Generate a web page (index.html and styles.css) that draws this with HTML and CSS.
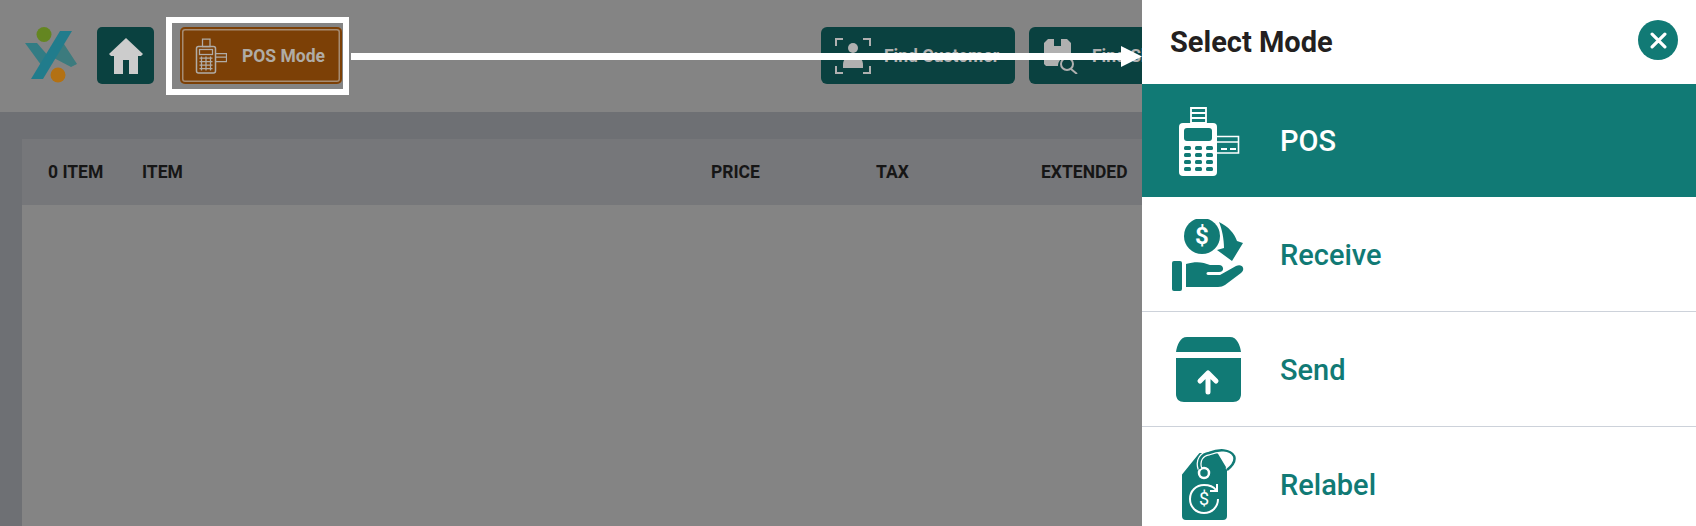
FILE: index.html
```html
<!DOCTYPE html>
<html lang="en">
<head>
<meta charset="utf-8">
<title>Select Mode</title>
<link rel="stylesheet" href="styles.css">
</head>
<body>
<div class="page">
  <header class="topbar">
    <svg class="logo" viewBox="0 0 56 60" aria-hidden="true">
      <circle cx="19" cy="7.500" r="7.500" fill="#7ea82a"/>
      <circle cx="33" cy="48" r="7.500" fill="#e08e18"/>
      <path d="M0 16H12L25 31 19 42Z" fill="#3f9ca6"/>
      <path d="M31 17 37 14 52 37 46 40 27 30Z" fill="#4b9a9e"/>
      <path d="M35 4H47L18 52H6Z" fill="#2a9cb0"/>
    </svg>
    <button class="home-btn" aria-label="Home">
      <svg viewBox="0 0 36 36"><path d="M18 0 35 16 33 18H30V36H21V22H15V36H6V18H3L1 16Z" fill="#fff"/></svg>
    </button>
    <button class="mode-btn">
      <svg class="mode-icon" viewBox="0 0 70 72">
        <path d="M21 2H36V17H21Z" fill="none" stroke="currentColor" stroke-width="2.500"/>
        <rect x="9" y="17" width="38" height="53" rx="4" fill="none" stroke="currentColor" stroke-width="3"/>
        <rect x="15" y="23" width="26" height="10" fill="none" stroke="currentColor" stroke-width="2.500"/>
        <path d="M15 40H41M15 47H41M15 54H41M15 61H41M19 37V65M28 37V65M37 37V65" stroke="currentColor" stroke-width="2.500" fill="none"/>
        <path d="M47 31H69V47H47M47 38H69" fill="none" stroke="currentColor" stroke-width="2.500"/>
      </svg>
      <span>POS Mode</span>
    </button>
    <div class="spacer"></div>
    <button class="find-btn">
      <svg viewBox="0 0 36 36" fill="none" stroke="currentColor" stroke-width="2"><path d="M1 8V1H8M28 1H35V8M1 28V35H8M28 35H35V28"/><circle cx="18" cy="10" r="5" fill="currentColor" stroke="none"/><path d="M8 27C8 21 11 19 18 19S28 21 28 27V30H8Z" fill="currentColor" stroke="none"/></svg>
      <span>Find Customer</span>
    </button>
    <button class="find-btn">
      <svg viewBox="0 0 36 36" fill="none"><path d="M1 5 5 1H11V8H18V1H24L28 5V19C20 18 15 22 15 28H3L1 26Z" fill="currentColor"/><circle cx="24" cy="26" r="6" stroke="currentColor" stroke-width="2"/><path d="M28 31 34 36" stroke="currentColor" stroke-width="2"/></svg>
      <span>Find Shipment</span>
    </button>
  </header>
  <main class="content">
    <div class="table">
      <div class="table-head">
        <span>0 ITEM</span><span>ITEM</span><span>PRICE</span><span>TAX</span><span>EXTENDED</span>
      </div>
    </div>
  </main>

  <div class="overlay"></div>

  <aside class="drawer">
    <div class="drawer-head">
      <h2>Select Mode</h2>
      <button class="close" aria-label="Close">
        <svg viewBox="0 0 16 16"><path d="M2 2 14 14M14 2 2 14" stroke="#fff" stroke-width="3" stroke-linecap="round"/></svg>
      </button>
    </div>
    <div class="mode active">
      <svg class="mode-svg" viewBox="0 -1 76 72">
        <path d="M21 2H36V17H21Z" fill="none" stroke="currentColor" stroke-width="1.800"/>
        <path d="M21 7H36M21 12H36" stroke="currentColor" stroke-width="1.800"/>
        <rect x="9" y="17" width="38" height="53" rx="4" fill="currentColor"/>
        <rect x="14" y="22" width="28" height="13" rx="3" fill="#117a75"/>
        <g fill="#117a75">
          <rect x="14" y="40" width="7" height="4" rx="1.500"/><rect x="25" y="40" width="7" height="4" rx="1.500"/><rect x="36" y="40" width="7" height="4" rx="1.500"/>
          <rect x="14" y="47" width="7" height="4" rx="1.500"/><rect x="25" y="47" width="7" height="4" rx="1.500"/><rect x="36" y="47" width="7" height="4" rx="1.500"/>
          <rect x="14" y="54" width="7" height="4" rx="1.500"/><rect x="25" y="54" width="7" height="4" rx="1.500"/><rect x="36" y="54" width="7" height="4" rx="1.500"/>
          <rect x="14" y="61" width="7" height="4" rx="1.500"/><rect x="25" y="61" width="7" height="4" rx="1.500"/><rect x="36" y="61" width="7" height="4" rx="1.500"/>
        </g>
        <path d="M47 30.500H68.500V47H47M47 36H68.500" fill="none" stroke="currentColor" stroke-width="1.600"/>
        <path d="M51 43H57M60 43H66" stroke="currentColor" stroke-width="1.800"/>
      </svg>
      <span>POS</span>
    </div>
    <div class="mode">
      <svg class="mode-svg" viewBox="0 0 76 72">
        <circle cx="32" cy="17" r="18" fill="currentColor"/>
        <text x="32" y="25" class="coin-text">$</text>
        <path d="M49 3C59 8 64 14 67 22L73 24 62 42 47 31 54 29C54 20 52 10 49 3Z" fill="currentColor"/>
        <rect x="2" y="42" width="10" height="30" rx="2" fill="currentColor"/>
        <path d="M16 45C26 42 33 43 40 46H49C54 46 55 53 49 53H38C36 53 36 56 38 56H50L66 47C72 44 76 50 71 54L55 66C53 67 51 68 48 68H16Z" fill="currentColor"/>
      </svg>
      <span>Receive</span>
    </div>
    <div class="mode">
      <svg class="mode-svg" viewBox="0 0 76 72">
        <path d="M6 18C7 11 10 3 17 3H60C67 3 70 11 71 18Z" fill="currentColor"/>
        <path d="M6 24H71V60C71 65 68 68 63 68H14C9 68 6 65 6 60Z" fill="currentColor"/>
        <path d="M38 58V40M30 47 38 39 46 47" fill="none" stroke="#fff" stroke-width="5" stroke-linecap="round" stroke-linejoin="round"/>
      </svg>
      <span>Send</span>
    </div>
    <div class="mode">
      <svg class="mode-svg" viewBox="0 0 76 72">
        <path d="M30 5H47L56 20V67C56 69 55 70 53 70H16C14 70 13 69 13 67V26Z" fill="currentColor" stroke="currentColor" stroke-width="2" stroke-linejoin="round"/>
        <circle cx="34" cy="24" r="5" fill="none" stroke="#fff" stroke-width="2.500"/>
        <path d="M30 20C27 11 32 5 39 4 49 0 60 0 64 7 66 12 62 17 57 21" fill="none" stroke="#fff" stroke-width="5"/>
        <path d="M30 20C27 11 32 5 39 4 49 0 60 0 64 7 66 12 62 17 57 21" fill="none" stroke="currentColor" stroke-width="2.500"/>
        <path d="M46 41C43 37 39 36 34 36 26 36 20 42 20 50S26 64 34 64 48 58 48 50" fill="none" stroke="#fff" stroke-width="2"/>
        <path d="M40 42H47V35" fill="none" stroke="#fff" stroke-width="2"/>
        <text x="34" y="56" class="tag-text">$</text>
      </svg>
      <span>Relabel</span>
    </div>
  </aside>

  <div class="callout-box"></div>
  <svg class="callout-arrow" viewBox="0 0 792 21" aria-hidden="true">
    <path d="M0 7H770V0L791 10.500 770 21V14H0Z" fill="#fff"/>
  </svg>
</div>
</body>
</html>
```
FILE: styles.css
```css
* { box-sizing: border-box; }
html, body { margin: 0; padding: 0; }
body { font-family: Roboto, "Liberation Sans", sans-serif; background: #fff; }
button { font-family: inherit; border: 0; padding: 0; cursor: pointer; }

.page {
  position: relative;
  width: 1696px;
  height: 526px;
  overflow: hidden;
  background: #8a8d92;
}

.topbar {
  height: 112px;
  background: #a6a6a6;
  display: flex;
  align-items: flex-start;
  padding: 27px 0 0 25px;
}
.logo { width: 56px; height: 60px; flex: none; }
.home-btn {
  flex: none;
  width: 57px;
  height: 57px;
  margin-left: 16px;
  border-radius: 5px;
  background: #0d5250;
  display: flex;
  align-items: center;
  justify-content: center;
}
.home-btn svg { width: 36px; height: 36px; }
.mode-btn {
  flex: none;
  width: 162px;
  height: 57px;
  margin-left: 26px;
  border-radius: 5px;
  background: #9c5008;
  box-shadow: inset 0 0 0 2px #9c5008, inset 0 0 0 3.500px #d0b090;
  color: #dcd8d0;
  font-size: 17.500px;
  font-weight: 700;
  display: flex;
  align-items: center;
  padding-left: 12px;
}
.mode-icon { width: 35px; height: 36px; margin-right: 15px; }
.spacer { flex: 1; }
.find-btn {
  flex: none;
  width: 194px;
  height: 57px;
  margin-right: 14px;
  border-radius: 6px;
  background: #0d5250;
  color: #dcdcdc;
  font-size: 17.500px;
  font-weight: 700;
  display: flex;
  align-items: center;
  gap: 13px;
  padding-left: 14px;
}
.find-btn svg { width: 36px; height: 36px; flex: none; }
.find-btn span { white-space: nowrap; }
.find-btn:last-child { margin-right: 473px; }

.content { padding: 27px 0 0 22px; }
.table { background: #a5a5a5; height: 400px; }
.table-head {
  height: 66px;
  background: #949599;
  display: grid;
  grid-template-columns: 94px 569px 165px 165px 1fr;
  align-items: center;
  padding-left: 26px;
  font-size: 17.500px;
  font-weight: 700;
  color: #1c1c1c;
}

.overlay {
  position: absolute;
  inset: 0;
  background: rgba(0, 0, 0, 0.2);
}

.drawer {
  position: absolute;
  top: 0;
  right: 0;
  bottom: 0;
  width: 554px;
  background: #fff;
}
.drawer-head {
  height: 84px;
  display: flex;
  align-items: center;
  justify-content: space-between;
  padding: 0 18px 0 28px;
}
.drawer-head h2 {
  margin: 0;
  font-size: 29px;
  font-weight: 700;
  color: #231f20;
}
.close {
  width: 40px;
  height: 40px;
  margin-top: -4px;
  border-radius: 50%;
  background: #117a75;
  display: flex;
  align-items: center;
  justify-content: center;
}
.close svg { width: 17px; height: 17px; }

.mode {
  height: 115px;
  display: flex;
  align-items: center;
  padding: 1px 0 0 28px;
  color: #117a75;
  font-size: 29px;
  font-weight: 500;
  border-bottom: 1px solid #cdd2da;
}
.mode.active { background: #117a75; color: #fff; height: 113px; border-bottom: 0; padding-top: 0; }
.mode-svg { width: 76px; height: 72px; margin-right: 34px; flex: none; }
.coin-text { font-size: 24px; font-weight: 700; fill: #fff; text-anchor: middle; font-family: Roboto, sans-serif; }
.tag-text { font-size: 18px; font-weight: 400; fill: #fff; text-anchor: middle; font-family: Roboto, sans-serif; }

.callout-box {
  position: absolute;
  left: 166px;
  top: 17px;
  width: 183px;
  height: 78px;
  border: 6px solid #fff;
}
.callout-arrow {
  position: absolute;
  left: 351px;
  top: 46px;
  width: 792px;
  height: 21px;
}
```
